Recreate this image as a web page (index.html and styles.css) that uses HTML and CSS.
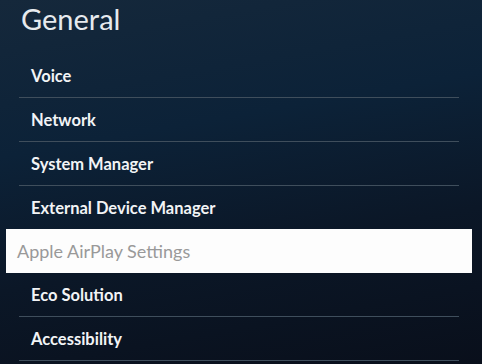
FILE: index.html
```html
<!DOCTYPE html>
<html lang="en">
  <head>
    <meta charset="UTF-8" />
    <meta name="viewport" content="width=device-width, initial-scale=1.0" />
    <title>General</title>
    <link rel="stylesheet" href="styles.css">
  </head>
  <body>
    <div class="screen">
      <h1 class="title">General</h1>
      <ul class="menu">
        <li class="menu-item">Voice</li>
        <li class="menu-item">Network</li>
        <li class="menu-item">System Manager</li>
        <li class="menu-item">External Device Manager</li>
        <li class="menu-item focused">Apple AirPlay Settings</li>
        <li class="menu-item">Eco Solution</li>
        <li class="menu-item">Accessibility</li>
      </ul>
    </div>
  </body>
</html>
```

FILE: styles.css
```css
html, body {
  margin: 0;
  padding: 0;
}
body {
  width: 482px;
  height: 364px;
  overflow: hidden;
  font-family: Lato, "Open Sans", sans-serif;
  background: linear-gradient(170deg, #15283b 0%, #0c2238 35%, #0b1727 65%, #090f1b 100%);
}
.screen {
  padding: 0 23px 0 19px;
}
.title {
  margin: 0;
  height: 54px;
  padding: 1px 0 0 2px;
  box-sizing: border-box;
  font-size: 29px;
  font-weight: 400;
  color: #e6eaee;
  line-height: 36px;
}
.menu {
  list-style: none;
  margin: 0;
  padding: 0;
}
.menu-item {
  height: 42px;
  line-height: 42px;
  padding: 1px 0 0 12px;
  border-bottom: 1px solid #3f4e5c;
  font-size: 16.5px;
  font-weight: 700;
  color: #f2f4f6;
}
.menu-item.focused {
  margin: -1px -13px 0;
  height: 43px;
  line-height: 43px;
  padding: 1px 0 0 11px;
  background: #fdfdfd;
  border-bottom: none;
  color: #999999;
  font-weight: 400;
  font-size: 18px;
}
```
